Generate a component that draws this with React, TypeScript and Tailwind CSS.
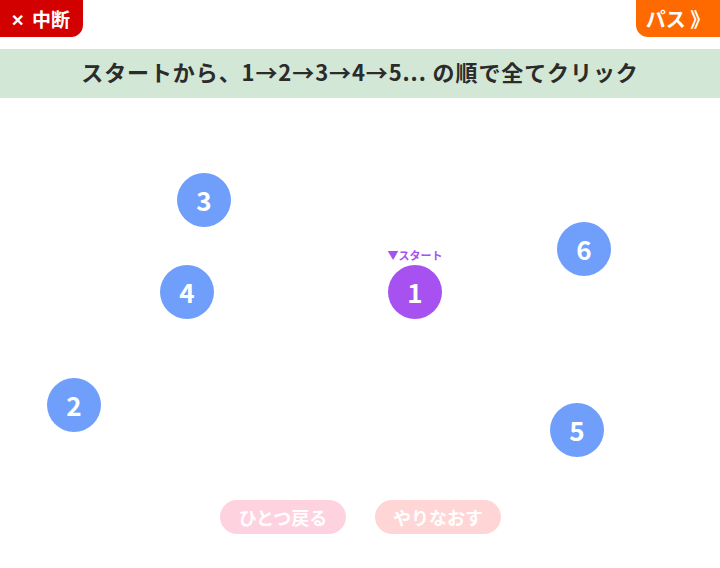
import React from "react";

const circles = [
  { n: 3, left: 177, top: 173, start: false },
  { n: 4, left: 160, top: 265, start: false },
  { n: 1, left: 388, top: 265, start: true },
  { n: 6, left: 557, top: 222, start: false },
  { n: 2, left: 47, top: 378, start: false },
  { n: 5, left: 550, top: 403, start: false },
];

export default function App() {
  const font = { fontFamily: '"Noto Sans CJK JP", "Noto Sans", sans-serif' };
  return (
    <div className="w-[720px] h-[568px] bg-white overflow-hidden" style={font}>
      <div className="flex justify-between h-[37px]">
        <button className="w-[83px] h-[37px] bg-[#d30000] text-white font-bold text-[19px] rounded-br-[12px] flex items-center justify-center gap-[8px] leading-none pr-[2px]">
          <span className="text-[16px]">✕</span>
          <span>中断</span>
        </button>
        <button className="w-[84px] h-[37px] bg-[#ff6a00] text-white font-bold text-[20px] rounded-bl-[12px] flex items-center justify-center leading-none">
          パス 》
        </button>
      </div>
      <div className="mt-[12px] h-[49px] bg-[#d2e7d5] flex items-center justify-center text-[22px] font-bold text-[#2b2b2b] tracking-[0.9px] pb-[4px]">
        スタートから、1→2→3→4→5... の順で全てクリック
      </div>
      <div className="relative h-[402px]">
        {circles.map((c) => (
          <div
            key={c.n}
            className="absolute"
            style={{ left: c.left, top: c.top - 98 }}
          >
            {c.start && (
              <div className="absolute left-1/2 -translate-x-1/2 top-[-15px] text-[11px] font-bold text-[#a651f0] whitespace-nowrap leading-none">
                ▼スタート
              </div>
            )}
            <div
              className={`w-[54px] h-[54px] rounded-full flex items-center justify-center text-white font-bold text-[26px] leading-none ${
                c.start ? "bg-[#a651f0]" : "bg-[#6f9ffb]"
              }`}
            >
              {c.n}
            </div>
          </div>
        ))}
      </div>
      <div className="flex justify-center gap-[29px] pl-[1px]">
        <button className="w-[126px] h-[34px] rounded-full bg-[#ffd2e0] text-white font-bold text-[18px] flex items-center justify-center leading-none">
          ひとつ戻る
        </button>
        <button className="w-[126px] h-[34px] rounded-full bg-[#ffd5d5] text-white font-bold text-[18px] flex items-center justify-center leading-none">
          やりなおす
        </button>
      </div>
    </div>
  );
}
